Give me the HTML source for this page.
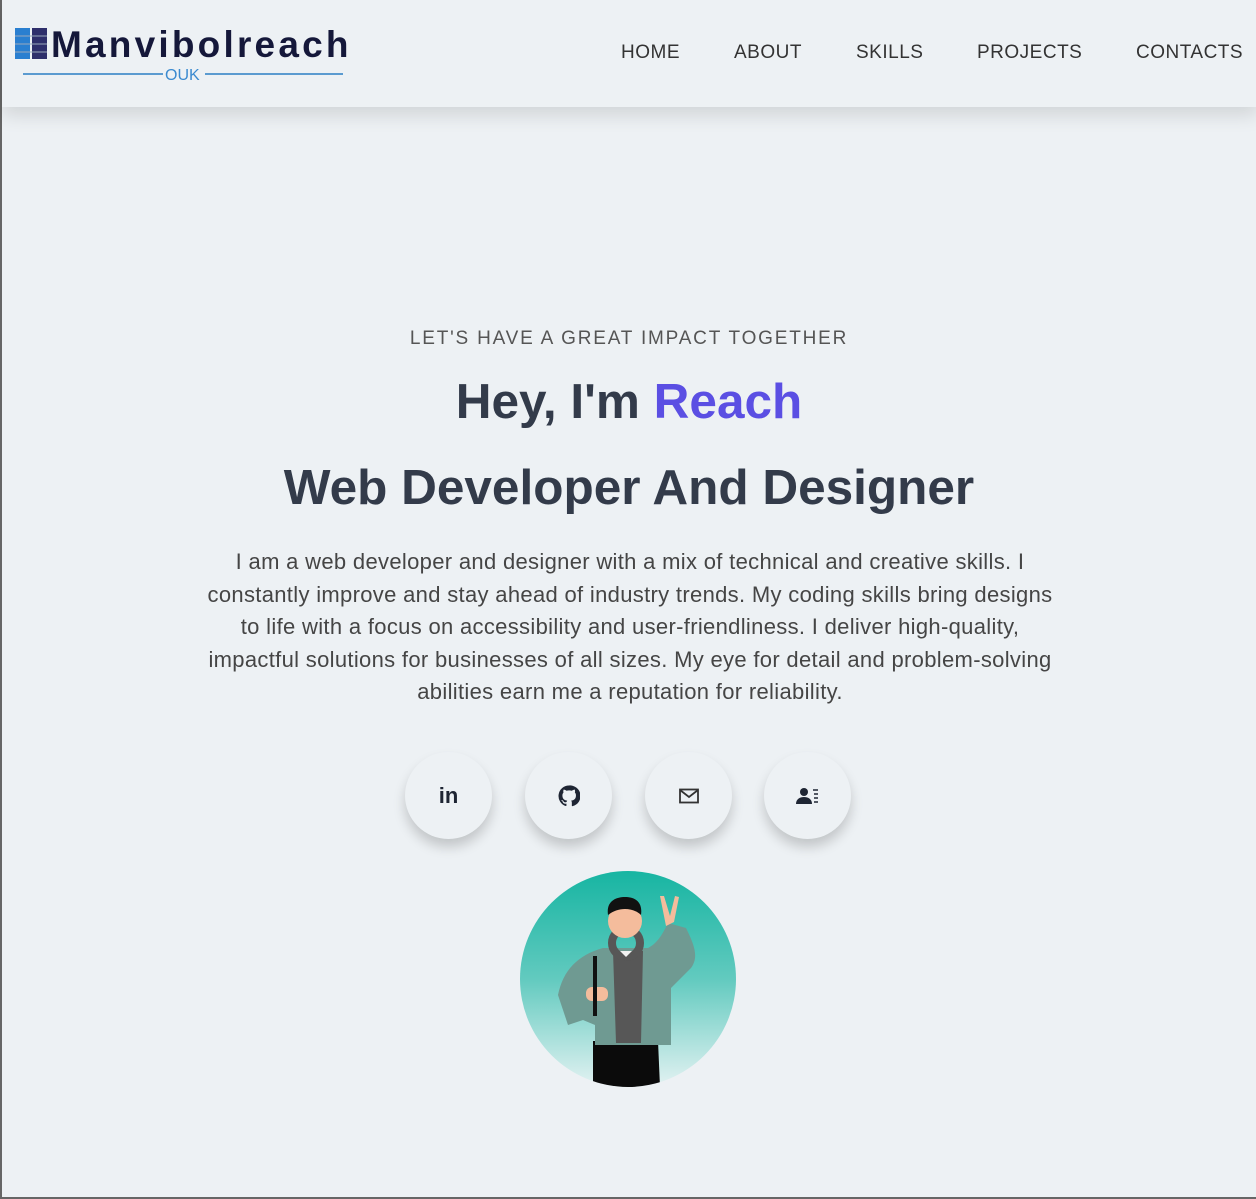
<!DOCTYPE html>
<html><head><meta charset="utf-8"><style>
*{margin:0;padding:0;box-sizing:border-box}
body{width:1256px;height:1199px;background:#edf1f4;font-family:"Liberation Sans",sans-serif;position:relative;overflow:hidden;border-left:2px solid #666;border-bottom:2px solid #666}
header{position:absolute;left:0;top:0;width:1256px;height:107px;background:#edf1f4;box-shadow:0 8px 18px rgba(0,0,0,.12)}
.logo{position:absolute;left:13px;top:27px}
.logo .t{position:absolute;left:36px;top:-3px;font-weight:bold;font-size:37px;color:#15183a;letter-spacing:3.2px;white-space:nowrap}
.nav{position:absolute;top:42px;font-size:19px;color:#333;letter-spacing:.5px}
.tag{position:absolute;top:328px;width:100%;text-align:center;font-size:19px;letter-spacing:1.8px;color:#555}
h1{position:absolute;width:100%;text-align:center;font-size:49.5px;font-weight:bold;color:#333b4a}
p{position:absolute;left:202px;width:852px;top:546px;text-align:center;font-size:22px;letter-spacing:.32px;line-height:32.5px;color:#454545}
.b{position:absolute;top:752px;width:87px;height:87px;border-radius:50%;background:#edf1f4;box-shadow:0 8px 12px rgba(0,0,0,.18);display:flex;align-items:center;justify-content:center}
</style></head><body>
<header>
<div class="logo">
<svg width="34" height="34" style="position:absolute;left:0;top:0"><rect x="0" y="1" width="15" height="31" fill="#2a7fd0"/><rect x="17" y="1" width="15" height="31" fill="#2e2f6b"/><g stroke="#9ab" stroke-width="1"><line x1="0" y1="9" x2="32" y2="9"/><line x1="0" y1="17" x2="32" y2="17"/><line x1="0" y1="25" x2="32" y2="25"/></g></svg>
<div class="t">Manvibolreach</div>
<svg width="340" height="20" style="position:absolute;left:8px;top:38px"><line x1="0" y1="9" x2="140" y2="9" stroke="#5b9bd0" stroke-width="2"/><line x1="182" y1="9" x2="320" y2="9" stroke="#5b9bd0" stroke-width="2"/><text x="142" y="15" font-size="16" fill="#3a8ad0" font-family="Liberation Sans">OUK</text></svg>
</div>
<div class="nav" style="left:619px">HOME</div>
<div class="nav" style="left:732px">ABOUT</div>
<div class="nav" style="left:854px">SKILLS</div>
<div class="nav" style="left:975px">PROJECTS</div>
<div class="nav" style="left:1134px">CONTACTS</div>
</header>
<div class="tag">LET'S HAVE A GREAT IMPACT TOGETHER</div>
<h1 style="top:373px">Hey, I'm <span style="color:#5b4fe3">Reach</span></h1>
<h1 style="top:459px">Web Developer And Designer</h1>
<p>I am a web developer and designer with a mix of technical and creative skills. I constantly improve and stay ahead of industry trends. My coding skills bring designs to life with a focus on accessibility and user-friendliness. I deliver high-quality, impactful solutions for businesses of all sizes. My eye for detail and problem-solving abilities earn me a reputation for reliability.</p>
<div class="b" style="left:403px"><span style="font-weight:bold;font-size:22px;color:#1e2533">in</span></div>
<div class="b" style="left:523px"><svg width="22" height="22" viewBox="0 0 24 24"><path fill="#1e2533" d="M12 .5a11.5 11.5 0 0 0-3.6 22.4c.6.1.8-.3.8-.6v-2c-3.2.7-3.9-1.5-3.9-1.5-.5-1.3-1.3-1.7-1.3-1.7-1-.7.1-.7.1-.7 1.2.1 1.8 1.2 1.8 1.2 1 1.8 2.8 1.3 3.5 1 .1-.8.4-1.3.7-1.6-2.6-.3-5.3-1.3-5.3-5.7 0-1.3.5-2.3 1.2-3.1-.1-.3-.5-1.5.1-3.1 0 0 1-.3 3.2 1.2a11 11 0 0 1 5.8 0c2.2-1.5 3.2-1.2 3.2-1.2.6 1.6.2 2.8.1 3.1.8.8 1.2 1.9 1.2 3.1 0 4.4-2.7 5.4-5.3 5.7.4.4.8 1.1.8 2.2v3.3c0 .3.2.7.8.6A11.5 11.5 0 0 0 12 .5z"/></svg></div>
<div class="b" style="left:643px"><svg width="20" height="16" viewBox="0 0 20 16"><rect x="1" y="1.5" width="18" height="13" fill="none" stroke="#333" stroke-width="1.8"/><path d="M1 2l9 7 9-7" fill="none" stroke="#333" stroke-width="1.8"/></svg></div>
<div class="b" style="left:762px"><svg width="24" height="18" viewBox="0 0 24 18"><circle cx="8" cy="5" r="4" fill="#1e2533"/><path d="M0 17c0-5 4-7 8-7s8 2 8 7z" fill="#1e2533"/><g stroke="#1e2533" stroke-width="1.5"><line x1="17" y1="3" x2="22" y2="3"/><line x1="18" y1="7" x2="22" y2="7"/><line x1="18" y1="11" x2="22" y2="11"/><line x1="18" y1="15" x2="22" y2="15"/></g></svg></div>
<svg style="position:absolute;left:518px;top:871px" width="216" height="216" viewBox="0 0 216 216">
<defs><linearGradient id="g" x1="0" y1="0" x2="0" y2="1"><stop offset="0" stop-color="#17b5a2"/><stop offset=".5" stop-color="#62cabf"/><stop offset="1" stop-color="#e3f2f2"/></linearGradient><clipPath id="c"><circle cx="108" cy="108" r="108"/></clipPath></defs>
<circle cx="108" cy="108" r="108" fill="url(#g)"/>
<g clip-path="url(#c)">
<path d="M73 170h65l2 46H73z" fill="#0b0b0b"/>
<path d="M38 124c5-25 20-40 45-47h45c10-5 15-15 20-25l18 5c10 20 12 30 5 40l-20 20v57H75v-20l-12-5-15 5z" fill="#6f9a92"/>
<path d="M93 80h30l-2 92H96z" fill="#575757"/>
<circle cx="106" cy="72" r="14" fill="none" stroke="#575757" stroke-width="8"/>
<path d="M100 80l6 6 6-6z" fill="#f2f2f2"/>
<circle cx="105" cy="50" r="17" fill="#f4bc9c"/>
<path d="M88 44c-2-14 8-18 17-18s18 4 16 18c-4-4-10-6-16-6s-12 2-17 6z" fill="#111"/>
<path d="M146 55l-6-30 4 0 6 20 5-20 4 1-5 25z" fill="#f4bc9c"/>
<rect x="66" y="116" width="22" height="14" rx="6" fill="#f4bc9c"/>
<rect x="73" y="85" width="4" height="60" fill="#111"/>
</g></svg>
</body></html>
